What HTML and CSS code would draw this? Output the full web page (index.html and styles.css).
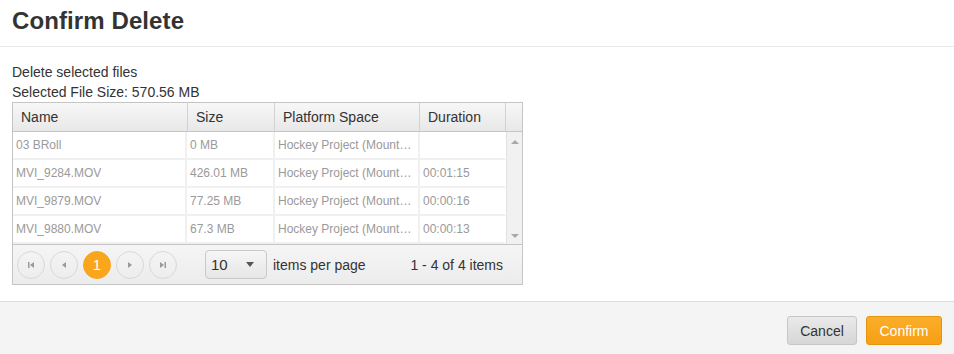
FILE: index.html
```html
<!DOCTYPE html>
<html lang="en">
<head>
    <meta charset="UTF-8">
    <meta name="viewport" content="width=device-width, initial-scale=1.0">
    <title>Confirm Delete</title>
    <link rel="stylesheet" href="styles.css">
</head>
<body>
    <div class="dialog">
        <div class="dialog-header">
            <h1>Confirm Delete</h1>
        </div>

        <div class="dialog-body">
            <p>Delete selected files</p>
            <p>Selected File Size: 570.56 MB</p>

            <div class="grid">
                <div class="grid-header">
                    <div class="th col-name">Name</div>
                    <div class="th col-size">Size</div>
                    <div class="th col-space">Platform Space</div>
                    <div class="th col-duration">Duration</div>
                    <div class="th col-scroll"></div>
                </div>

                <div class="grid-content">
                    <div class="rows">
                        <div class="row">
                            <div class="td col-name">03 BRoll</div>
                            <div class="td col-size">0 MB</div>
                            <div class="td col-space">Hockey Project (Mount…</div>
                            <div class="td col-duration"></div>
                        </div>
                        <div class="row">
                            <div class="td col-name">MVI_9284.MOV</div>
                            <div class="td col-size">426.01 MB</div>
                            <div class="td col-space">Hockey Project (Mount…</div>
                            <div class="td col-duration">00:01:15</div>
                        </div>
                        <div class="row">
                            <div class="td col-name">MVI_9879.MOV</div>
                            <div class="td col-size">77.25 MB</div>
                            <div class="td col-space">Hockey Project (Mount…</div>
                            <div class="td col-duration">00:00:16</div>
                        </div>
                        <div class="row">
                            <div class="td col-name">MVI_9880.MOV</div>
                            <div class="td col-size">67.3 MB</div>
                            <div class="td col-space">Hockey Project (Mount…</div>
                            <div class="td col-duration">00:00:13</div>
                        </div>
                    </div>
                    <div class="scrollbar">
                        <span class="arrow-up"></span>
                        <span class="arrow-down"></span>
                    </div>
                </div>

                <div class="pager">
                    <div class="pager-nav">
                        <span class="page-btn">
                            <svg width="8" height="8" viewBox="0 0 8 8"><rect x="1" y="1" width="1.5" height="6" fill="#9a9a9a"/><path d="M7 1 L3 4 L7 7 Z" fill="#9a9a9a"/></svg>
                        </span>
                        <span class="page-btn">
                            <svg width="8" height="8" viewBox="0 0 8 8"><path d="M6 1 L2 4 L6 7 Z" fill="#9a9a9a"/></svg>
                        </span>
                        <span class="page-btn current">1</span>
                        <span class="page-btn">
                            <svg width="8" height="8" viewBox="0 0 8 8"><path d="M2 1 L6 4 L2 7 Z" fill="#9a9a9a"/></svg>
                        </span>
                        <span class="page-btn">
                            <svg width="8" height="8" viewBox="0 0 8 8"><path d="M1 1 L5 4 L1 7 Z" fill="#9a9a9a"/><rect x="5.5" y="1" width="1.5" height="6" fill="#9a9a9a"/></svg>
                        </span>
                    </div>
                    <div class="page-size">
                        <span class="select">
                            <span>10</span>
                            <svg width="8" height="6" viewBox="0 0 8 6"><path d="M0 1 L8 1 L4 6 Z" fill="#555"/></svg>
                        </span>
                        <span class="page-size-label">items per page</span>
                    </div>
                    <div class="pager-info">1 - 4 of 4 items</div>
                </div>
            </div>
        </div>

        <div class="dialog-footer">
            <button class="btn btn-cancel">Cancel</button>
            <button class="btn btn-confirm">Confirm</button>
        </div>
    </div>
</body>
</html>
```

FILE: styles.css
```css
:root {
    --text-color: #333;
    --muted-color: #9a9a9a;
    --border-color: #c5c5c5;
    --cell-line: #f0f0f0;
    --orange: #f9a61d;
}

* {
    box-sizing: border-box;
    margin: 0;
    padding: 0;
    font-family: 'Liberation Sans', Arial, sans-serif;
}

body {
    background: white;
    color: var(--text-color);
    font-size: 14px;
}

.dialog {
    min-height: 100vh;
    display: flex;
    flex-direction: column;
}

.dialog-header {
    height: 47px;
    padding: 7px 12px 0;
    border-bottom: 1px solid #eaeaea;
}

h1 {
    font-size: 24px;
    font-weight: 700;
    line-height: 28px;
    color: #333;
    letter-spacing: 0.1px;
}

.dialog-body {
    padding: 15px 12px 16px;
}

.dialog-body p {
    line-height: 20px;
}

/* grid */
.grid {
    width: 511px;
    border: 1px solid var(--border-color);
}

.grid-header {
    display: flex;
    height: 29px;
    background: linear-gradient(#f7f7f7, #e8e8e8);
    border-bottom: 1px solid var(--border-color);
}

.th {
    height: 28px;
    line-height: 28px;
    padding-left: 8px;
    border-right: 1px solid #d2d2d2;
    font-size: 14px;
    color: #333;
}

.th.col-scroll {
    border-right: none;
}

.col-name { width: 175px; }
.col-size { width: 87px; }
.col-space { width: 145px; }
.col-duration { width: 86px; }
.col-scroll { width: 16px; }

.grid-content {
    display: flex;
    height: 112px;
}

.rows {
    width: 493px;
}

.row {
    display: flex;
    height: 28px;
}

.td {
    height: 28px;
    line-height: 26px;
    padding: 0 2px 0 3px;
    border-right: 2px solid var(--cell-line);
    border-bottom: 2px solid var(--cell-line);
    font-size: 12px;
    color: var(--muted-color);
    white-space: nowrap;
}

.row .col-name { width: 174px; }
.row .col-size { width: 88px; }
.row .col-space { width: 145px; }
.row .col-duration { width: 86px; border-right-color: #fff; }

.scrollbar {
    width: 16px;
    background: #f1f1f1;
    border-left: 1px solid #e2e2e2;
    display: flex;
    flex-direction: column;
    justify-content: space-between;
    align-items: center;
    padding: 8px 0 6px;
}

.arrow-up,
.arrow-down {
    width: 0;
    height: 0;
    border-left: 4px solid transparent;
    border-right: 4px solid transparent;
}

.arrow-up {
    border-bottom: 4px solid #a8a8a8;
}

.arrow-down {
    border-top: 4px solid #a8a8a8;
}

/* pager */
.pager {
    display: flex;
    align-items: center;
    height: 40px;
    padding: 0 19px 0 4px;
    border-top: 1px solid var(--border-color);
    background: linear-gradient(#f5f5f5, #ececec);
}

.pager-nav {
    display: flex;
    gap: 5px;
}

.page-btn {
    width: 28px;
    height: 28px;
    border-radius: 50%;
    border: 1px solid #d8d8d8;
    display: flex;
    align-items: center;
    justify-content: center;
}

.page-btn.current {
    background: var(--orange);
    border-color: var(--orange);
    color: white;
    font-size: 15px;
}

.page-size {
    display: flex;
    align-items: center;
    margin-left: 28px;
}

.select {
    width: 62px;
    height: 29px;
    border: 1px solid #c9c9c9;
    border-radius: 4px;
    background: linear-gradient(#f6f6f6, #e6e6e6);
    display: flex;
    align-items: center;
    justify-content: space-between;
    padding: 0 12px 1px 5px;
    font-size: 15px;
}

.page-size-label {
    margin-left: 6px;
    font-size: 14px;
}

.pager-info {
    margin-left: auto;
    font-size: 14px;
}

/* footer */
.dialog-footer {
    flex: 1;
    display: flex;
    justify-content: flex-end;
    align-items: flex-start;
    gap: 9px;
    padding: 14px 12px;
    background: #f4f4f4;
    border-top: 1px solid #dcdcdc;
}

.btn {
    height: 29px;
    padding: 0 12px;
    border-radius: 3px;
    font-size: 14px;
    cursor: pointer;
}

.btn-cancel {
    width: 70px;
    background: linear-gradient(#eaeaea, #d6d6d6);
    border: 1px solid #c6c6c6;
    color: #333;
}

.btn-confirm {
    width: 76px;
    background: linear-gradient(#fbad28, #f6a015);
    border: 1px solid #e4950f;
    color: white;
}
```
